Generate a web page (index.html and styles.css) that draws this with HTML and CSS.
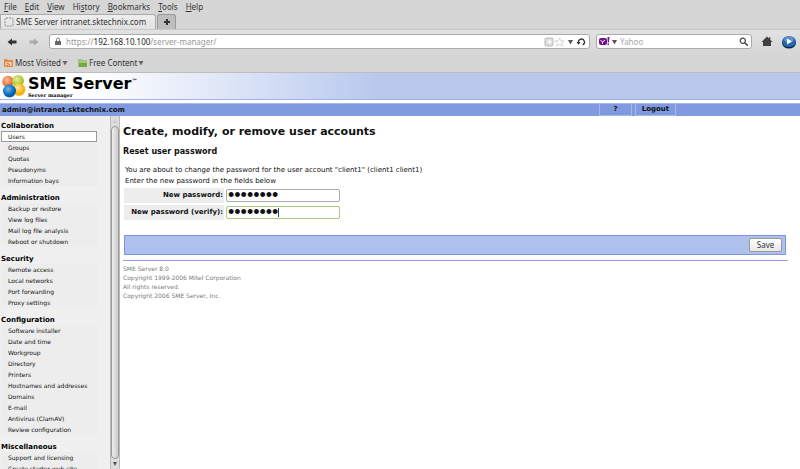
FILE: index.html
```
<!DOCTYPE html>
<html lang="en">
<head>
<meta charset="utf-8">
<title>SME Server intranet.sktechnix.com</title>
<link rel="stylesheet" href="styles.css">
</head>
<body>
<header class="browser">
  <nav class="menubar" aria-label="Menu">
    <button><u>F</u>ile</button><button><u>E</u>dit</button><button><u>V</u>iew</button><button>Hi<u>s</u>tory</button><button><u>B</u>ookmarks</button><button><u>T</u>ools</button><button><u>H</u>elp</button>
  </nav>
  <div class="tabs">
    <button class="tab"><svg width="10" height="10" viewBox="0 0 10 10"><rect x="1" y="1" width="8" height="8" rx="1" fill="#e8e8e8" stroke="#888" stroke-dasharray="2 1"/></svg>SME Server intranet.sktechnix.com</button>
    <button class="newtab" aria-label="New tab"><svg width="8" height="8" viewBox="0 0 8 8"><path d="M3 1h2v2h2v2H5v2H3V5H1V3h2z" fill="#333"/></svg></button>
  </div>
  <div class="toolbar">
    <button class="arrow" aria-label="Back"><svg width="10" height="8" viewBox="0 0 10 8"><path d="M0.500 4L5 0.500v2h4.500v3H5v2z" fill="#333"/></svg></button>
    <button class="arrow" aria-label="Forward"><svg width="10" height="8" viewBox="0 0 10 8"><path d="M9.500 4L5 0.500v2H0.500v3H5v2z" fill="#aaa"/></svg></button>
    <div class="field address">
      <svg width="8" height="9" viewBox="0 0 8 9"><path d="M2.500 4V2.500a1.500 1.500 0 0 1 3 0V4" fill="none" stroke="#777"/><rect x="1" y="4" width="6" height="4" rx=".5" fill="#666"/></svg>
      <span class="url">https://<b>192.168.10.100</b>/server-manager/</span>
      <svg width="10" height="10" viewBox="0 0 10 10"><rect x="1" y="1" width="8" height="8" rx="1" fill="#ddd" stroke="#bbb"/><path d="M5.500 2.500v5M3 5h5" stroke="#fff" fill="none"/></svg>
      <svg width="11" height="10" viewBox="0 0 11 10"><path d="M5.500.8l1.300 3 3.400.2-2.600 2 .9 3.200-3-1.800-3 1.800.9-3.200L.8 4l3.400-.2z" fill="#fff" stroke="#ccc" stroke-width=".8"/></svg>
      <svg width="10" height="8" viewBox="0 0 10 8"><path d="M3 2h5L5.500 6.500z" fill="#555"/></svg>
      <svg class="reload" width="10" height="10" viewBox="0 0 10 10"><path d="M2.500 5.500a3 3 0 1 1 4.200 2.300" fill="none" stroke="#333" stroke-width="1.300"/><path d="M.5 5h4L2.500 7.800z" fill="#333"/></svg>
    </div>
    <div class="field search">
      <svg width="11" height="9" viewBox="0 0 11 9"><rect x="0" y="1" width="8" height="7" rx="2" fill="#71148c"/><path d="M1.500 3l2 2v2M6 3L3.500 5.200" stroke="#fff" fill="none"/><path d="M8.500 0h2L9.900 5.500H8.700zM8.500 6.500h1.500V8H8.500z" fill="#71148c"/></svg>
      <svg width="8" height="8" viewBox="0 0 8 8"><path d="M2 2h5L4.500 6.500z" fill="#555"/></svg>
      <input type="text" placeholder="Yahoo" aria-label="Search">
      <svg width="10" height="10" viewBox="0 0 10 10"><circle cx="3.800" cy="3.800" r="2.600" fill="#fff" stroke="#444" stroke-width="1.200"/><path d="M5.800 5.800l3 3" stroke="#444" stroke-width="1.600"/></svg>
    </div>
    <button class="home" aria-label="Home"><svg width="12" height="11" viewBox="0 0 12 11"><path d="M6 .5L.5 6H2v4h8V6h1.500L9.300 3.800V1.200H8v1.300z" fill="#404040"/></svg></button>
    <button aria-label="Play"><svg width="14" height="14" viewBox="0 0 14 14"><ellipse cx="7" cy="8" rx="7" ry="5.500" fill="#09264f"/><ellipse cx="7" cy="6.500" rx="6.800" ry="5.500" fill="#2468ae"/><ellipse cx="7" cy="4.500" rx="5" ry="3" fill="#5d94cb"/><path d="M5 3.500l5 3-5 3z" fill="#fff"/></svg></button>
  </div>
  <nav class="bookmarks" aria-label="Bookmarks">
    <button><svg width="11" height="10" viewBox="0 0 11 10"><path d="M1 1h3l1 1h5v7H1z" fill="#e28a4a"/><path d="M2.500 4h6v4h-6z" fill="#f8d9bf"/><path d="M3.500 5q3 0 3 3M3.500 7h1v1" stroke="#d9641c" fill="none"/></svg>Most Visited <svg width="6" height="6" viewBox="0 0 6 6"><path d="M.5 1h5L3 5.500z" fill="#666"/></svg></button>
    <button><svg width="11" height="10" viewBox="0 0 11 10"><path d="M1 1h4l1 1h4v7H1z" fill="#a9b99a"/><path d="M2 3h8v6H2z" fill="#6fae3e"/><path d="M2 3h8v2H2z" fill="#9ccb70"/></svg>Free Content <svg width="6" height="6" viewBox="0 0 6 6"><path d="M.5 1h5L3 5.500z" fill="#666"/></svg></button>
  </nav>
</header>
<div class="banner">
  <svg width="24" height="23" viewBox="0 0 24 23"><defs><radialGradient id="o" cx=".4" cy=".35"><stop offset="0" stop-color="#fbc3a0"/><stop offset="1" stop-color="#ee6a35"/></radialGradient><radialGradient id="g" cx=".4" cy=".35"><stop offset="0" stop-color="#e6eea0"/><stop offset="1" stop-color="#a9c62d"/></radialGradient><radialGradient id="y" cx=".4" cy=".35"><stop offset="0" stop-color="#ffe9a0"/><stop offset="1" stop-color="#fbb00c"/></radialGradient><radialGradient id="b" cx=".4" cy=".35"><stop offset="0" stop-color="#68b9e8"/><stop offset="1" stop-color="#0661ae"/></radialGradient></defs><circle cx="6" cy="6.500" r="5.800" fill="url(#o)"/><circle cx="16" cy="6" r="6" fill="url(#g)"/><circle cx="17" cy="14.500" r="6.300" fill="url(#y)"/><circle cx="7.500" cy="16" r="6.500" fill="url(#b)"/></svg>
  <div class="brand"><strong>SME Server<sup>™</sup></strong><span>Server manager</span></div>
</div>
<div class="userbar"><b>admin@intranet.sktechnix.com</b><a href="#help">?</a><a class="logout" href="#logout">Logout</a></div>
<div class="panes">
  <nav class="sidebar" aria-label="Server manager">
    <h3>Collaboration</h3>
    <ul><li class="current"><a href="#">Users</a></li><li><a href="#">Groups</a></li><li><a href="#">Quotas</a></li><li><a href="#">Pseudonyms</a></li><li><a href="#">Information bays</a></li></ul>
    <h3>Administration</h3>
    <ul><li><a href="#">Backup or restore</a></li><li><a href="#">View log files</a></li><li><a href="#">Mail log file analysis</a></li><li><a href="#">Reboot or shutdown</a></li></ul>
    <h3>Security</h3>
    <ul><li><a href="#">Remote access</a></li><li><a href="#">Local networks</a></li><li><a href="#">Port forwarding</a></li><li><a href="#">Proxy settings</a></li></ul>
    <h3>Configuration</h3>
    <ul><li><a href="#">Software installer</a></li><li><a href="#">Date and time</a></li><li><a href="#">Workgroup</a></li><li><a href="#">Directory</a></li><li><a href="#">Printers</a></li><li><a href="#">Hostnames and addresses</a></li><li><a href="#">Domains</a></li><li><a href="#">E-mail</a></li><li><a href="#">Antivirus (ClamAV)</a></li><li><a href="#">Review configuration</a></li></ul>
    <h3>Miscellaneous</h3>
    <ul><li><a href="#">Support and licensing</a></li><li><a href="#">Create starter web site</a></li></ul>
  </nav>
  <div class="scrollbar" aria-hidden="true"><svg width="8" height="10" viewBox="0 0 8 10"><path d="M2 7h4L4 3z" fill="#ccc"/></svg><div class="thumb"></div><svg width="8" height="10" viewBox="0 0 8 10"><path d="M2 3h4L4 7z" fill="#555"/></svg></div>
  <main>
    <h1>Create, modify, or remove user accounts</h1>
    <h2>Reset user password</h2>
    <form>
      <p>You are about to change the password for the user account "client1" (client1 client1)</p>
      <p>Enter the new password in the fields below</p>
      <div class="row"><label for="pw">New password:</label><div class="entry"><input id="pw" type="password" value="password"></div></div>
      <div class="row"><label for="pw2">New password (verify):</label><div class="entry active"><input id="pw2" type="password" value="password"><span class="caret"></span></div></div>
      <div class="actions"><button type="button">Save</button></div>
    </form>
    <footer>SME Server 8.0<br>Copyright 1999-2006 Mitel Corporation<br>All rights reserved.<br>Copyright 2006 SME Server, Inc.</footer>
  </main>
</div>
</body>
</html>
```
FILE: styles.css
```
* { box-sizing: border-box; }
body { margin: 0; height: 100vh; overflow: hidden; display: flex; flex-direction: column; background: #fff; color: #111; font: 7px/11px "DejaVu Sans", sans-serif; }
button { font: inherit; color: inherit; border: 0; padding: 0; background: none; }
a { color: inherit; text-decoration: none; }
svg { display: block; flex: none; }
h1, h2, h3, p, ul { margin: 0; padding: 0; }
ul { list-style: none; }

.browser { background: #d6d6d6; border-bottom: 1px solid #bdbdbd; color: #333; font: 8px/14px "Noto Sans", sans-serif; }
.menubar { display: flex; gap: 8px; padding-left: 4px; height: 14px; }
.tabs { display: flex; height: 16px; gap: 1px; border-bottom: 1px solid #cacaca; }
.tab { display: flex; align-items: center; gap: 2px; width: 156px; padding-left: 3px; border: 1px solid #aaa; border-bottom: 0; border-radius: 0 3px 0 0; background: linear-gradient(#eee, #e1e1e1); white-space: nowrap; }
.newtab { display: flex; align-items: center; justify-content: center; width: 19px; border: 1px solid #999; border-bottom: 0; border-radius: 3px 3px 0 0; background: #bebebe; }
.toolbar { display: flex; align-items: center; height: 23px; padding: 0 4px 0 7px; background: linear-gradient(#e2e2e2, #d6d6d6); }
.arrow { margin-right: 12px; }
.arrow + .field { margin-left: -2px; }
.field { display: flex; align-items: center; height: 15px; border: 1px solid #aaa; border-radius: 3px; background: #fff; }
.address { flex: 1; padding: 0 3px 0 4px; }
.url { flex: 1; padding-left: 4px; color: #999; }
.url b { font-weight: 400; color: #222; }
.reload { margin-left: 1px; }
.search { width: 156px; margin: 0 9px 0 6px; padding: 0 2px; }
.search input { flex: 1; min-width: 0; border: 0; padding: 0 0 0 2px; font: inherit; background: none; outline: 0; }
.search input::placeholder { color: #aaa; }
.home { margin-right: 9px; }
.bookmarks { display: flex; gap: 9px; height: 19px; padding: 0 3px; }
.bookmarks button { display: flex; align-items: center; gap: 1px; }

.banner { display: flex; height: 27px; padding: 2px 0 0 2px; border-bottom: 1px solid #9fb3e4; background: linear-gradient(90deg, #fff 0, #fff 90px, #b9c9ee 375px); }
.brand { display: flex; flex-direction: column; padding-left: 2px; color: #000; }
.brand strong { font-size: 16px; line-height: 18px; height: 17px; }
.brand sup { font-size: 6px; line-height: 6px; vertical-align: 6px; }
.brand span { font: bold 5px/6px "DejaVu Serif", serif; }
.userbar { display: flex; align-items: center; height: 13px; margin-top: 3px; padding: 0 124px 0 2px; background: #7f9adf; border-top: 1px solid #a9b9e9; font-weight: 700; color: #111; }
.userbar b { flex: 1; }
.userbar a { width: 33px; text-align: center; border: 1px solid #a6b8ea; border-top: 0; }
.userbar .logout { width: 41px; margin-left: 3px; }

.panes { display: flex; flex: 1; min-height: 0; }
.sidebar { width: 110px; padding: 5px 0 0 1px; background: #f0f0f0; overflow: hidden; font-size: 6px; }
.sidebar h3 { font-size: 7px; line-height: 10px; color: #000; }
.sidebar ul { width: 96px; margin-bottom: 7px; background: #ededed; }
.sidebar li { height: 11px; padding-left: 7px; white-space: nowrap; }
.sidebar .current { border: 1px solid #999; background: #fff; padding-left: 6px; line-height: 9px; }
.scrollbar { display: flex; flex-direction: column; width: 10px; border: 1px solid #bbb; border-width: 0 1px; background: #ddd; }
.thumb { flex: 1; border: 1px solid #999; border-radius: 4px; background: linear-gradient(90deg, #eee, #ccc); }
main { flex: 1; padding: 9px 12px 0 3px; }
h1 { font-size: 11px; line-height: 14px; }
h2 { margin-top: 7px; font-size: 8px; line-height: 12px; }
form { padding: 7px 2px 0 1px; }
form p { padding-left: 1px; }
.row { display: flex; align-items: center; gap: 2px; height: 17px; }
.row label { width: 100px; height: 15px; line-height: 15px; text-align: right; padding-right: 1px; background: #ededed; font-weight: 700; }
.entry { position: relative; }
.entry input { display: block; width: 114px; height: 13px; padding: 0 1px; border: 1px solid #aaa; border-radius: 2px; background: #fff; color: #111; font: 18px/11px "Liberation Sans", sans-serif; outline: 0; }
.active input { border-color: #a9c98a; }
.caret { position: absolute; left: 52px; top: 2px; width: 1px; height: 9px; background: #345; }
.actions { display: flex; align-items: center; justify-content: flex-end; height: 20px; margin-top: 14px; padding-right: 3px; border: 1px solid #7c96dc; background: #afc0ec; }
.actions button { width: 33px; height: 14px; border: 1px solid #999; border-radius: 2px; background: linear-gradient(#fff, #e8e8e8); font: 8px/12px "Noto Sans", sans-serif; color: #333; }
footer { margin-top: 5px; padding-top: 3px; border-top: 1px solid #8fa5e2; font-size: 6px; line-height: 9px; color: #7b7b7b; }
```
